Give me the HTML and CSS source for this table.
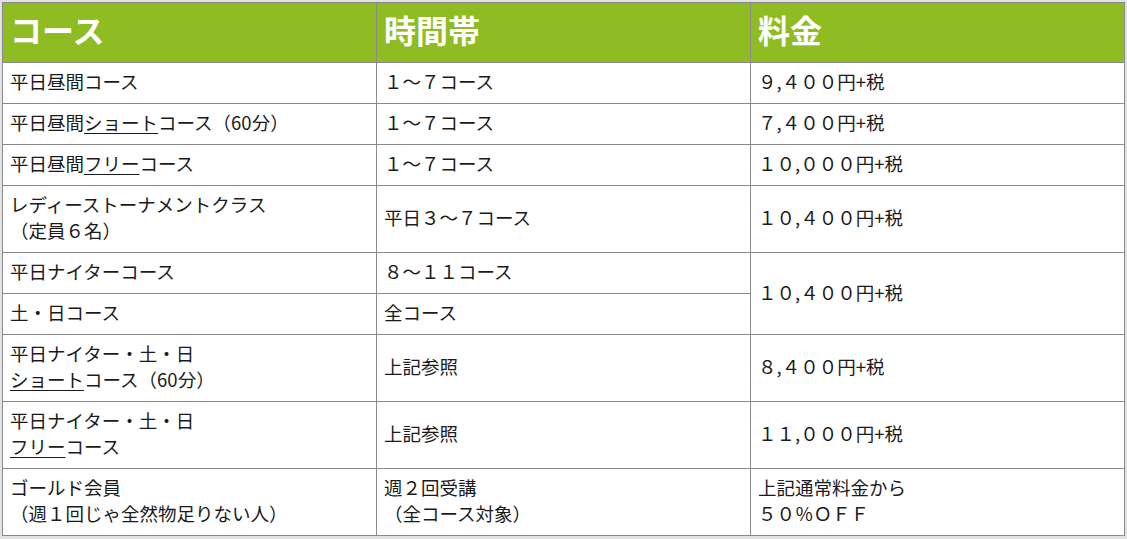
FILE: index.html
```html
<!DOCTYPE html>
<html lang="ja">
<head>
<meta charset="utf-8">
<title>料金表</title>
<link rel="stylesheet" href="styles.css">
</head>
<body>
<table class="price-table">
  <thead>
    <tr>
      <th>コース</th>
      <th>時間帯</th>
      <th>料金</th>
    </tr>
  </thead>
  <tbody>
    <tr>
      <td>平日昼間コース</td>
      <td>１～７コース</td>
      <td>９,４００円+税</td>
    </tr>
    <tr>
      <td>平日昼間<span class="ul">ショート</span>コース（60分）</td>
      <td>１～７コース</td>
      <td>７,４００円+税</td>
    </tr>
    <tr>
      <td>平日昼間<span class="ul">フリー</span>コース</td>
      <td>１～７コース</td>
      <td>１０,０００円+税</td>
    </tr>
    <tr>
      <td>レディーストーナメントクラス<br>（定員６名）</td>
      <td>平日３～７コース</td>
      <td>１０,４００円+税</td>
    </tr>
    <tr>
      <td>平日ナイターコース</td>
      <td>８～１１コース</td>
      <td rowspan="2">１０,４００円+税</td>
    </tr>
    <tr>
      <td>土・日コース</td>
      <td>全コース</td>
    </tr>
    <tr>
      <td>平日ナイター・土・日<br><span class="ul">ショート</span>コース（60分）</td>
      <td>上記参照</td>
      <td>８,４００円+税</td>
    </tr>
    <tr>
      <td>平日ナイター・土・日<br><span class="ul">フリー</span>コース</td>
      <td>上記参照</td>
      <td>１１,０００円+税</td>
    </tr>
    <tr>
      <td>ゴールド会員<br>（週１回じゃ全然物足りない人）</td>
      <td>週２回受講<br>（全コース対象）</td>
      <td>上記通常料金から<br>５０％ＯＦＦ</td>
    </tr>
  </tbody>
</table>
</body>
</html>
```

FILE: styles.css
```css
html, body {
  margin: 0;
  padding: 0;
  background: #e2e2e2;
}

body {
  padding: 2px 2px 0 2px;
  font-family: "Noto Sans CJK JP", "Noto Sans", sans-serif;
  color: #1a1a1a;
}

.price-table {
  width: 1123px;
  border-collapse: collapse;
  table-layout: fixed;
  background: #ffffff;
  border: 1px solid #8a8a8a;
}

.price-table th,
.price-table td {
  border: 1px solid #8a8a8a;
  padding: 5px 7px 9px 7px;
  text-align: left;
  vertical-align: middle;
}

.price-table th {
  background: #8fbc22;
  color: #ffffff;
  font-size: 32px;
  font-weight: 700;
  line-height: 45px;
  padding-top: 4px;
  padding-bottom: 10px;
}

.price-table td {
  font-size: 18.5px;
  line-height: 26px;
  font-weight: 400;
}

.ul {
  text-decoration: underline;
  text-underline-offset: 3px;
}
```
